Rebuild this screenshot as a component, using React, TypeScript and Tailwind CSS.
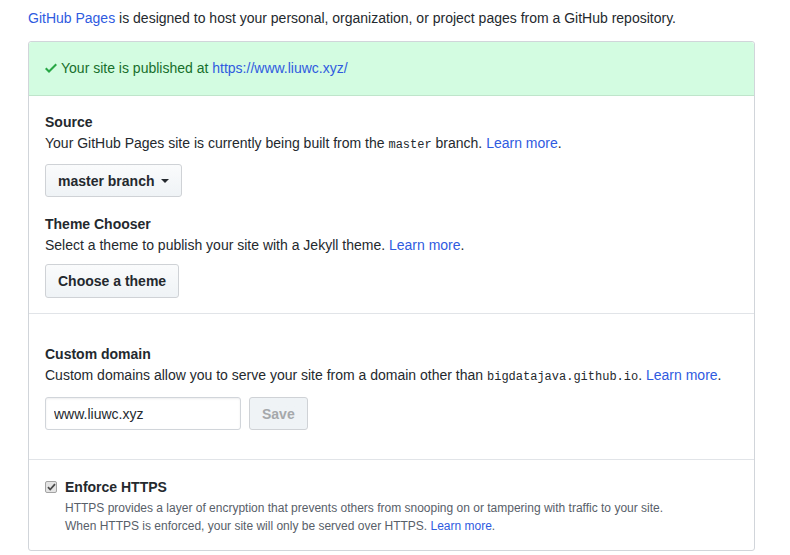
import React from "react";

const LINK = "text-[#2f5bdf]";

function Check() {
  return (
    <svg width="12" height="16" viewBox="0 0 12 16" className="inline-block fill-[#28a745] mr-[4px] -mt-[2px] align-middle">
      <path fillRule="evenodd" d="M12 5l-8 8-4-4 1.5-1.5L4 10l6.5-6.5L12 5z" />
    </svg>
  );
}

function Button({ children, disabled, h = "h-[34px]" }: { children: React.ReactNode; disabled?: boolean; h?: string }) {
  return (
    <button
      type="button"
      className={
        "inline-flex items-center px-3 rounded-[3px] border border-[#cfd2d6] bg-gradient-to-b text-sm font-bold " +
        h +
        (disabled ? " from-[#eff3f6] to-[#eff3f6] text-[#a5a8ab]" : " from-[#fafbfc] to-[#eff3f6] text-[#24292e]")
      }
    >
      {children}
    </button>
  );
}

export default function App() {
  return (
    <div className="min-h-screen bg-white text-[#24292e] font-['Liberation_Sans',Arial,sans-serif] text-sm pt-2 pl-[28px]">
      <p className="leading-5 mb-[13px]">
        <a className={LINK}>GitHub Pages</a> is designed to host your personal, organization, or project pages
        from a GitHub repository.
      </p>

      <div className="w-[727px] border border-[#d1d5da] rounded-[3px]">
        {/* Published flash */}
        <div className="bg-[#d3fce1] border-b border-[#bfe5cb] px-4 pt-4 pb-[17px] leading-5 text-[#176f2c] rounded-t-[3px]">
          <Check />
          Your site is published at <a className={LINK}>https://www.liuwc.xyz/</a>
        </div>

        {/* Source + theme */}
        <div className="px-4 pt-4 pb-[15px] border-b border-[#e1e4e8]">
          <h3 className="font-bold leading-5 mb-px">Source</h3>
          <p className="leading-5 mb-[9px]">
            Your GitHub Pages site is currently being built from the{" "}
            <code className="font-['Liberation_Mono',monospace] text-[12px]">master</code> branch.{" "}
            <a className={LINK}>Learn more</a>.
          </p>
          <Button h="h-[33px]">
            master branch
            <svg width="8" height="4" viewBox="0 0 8 4" className="ml-[7px] fill-[#24292e]">
              <path d="M0 0h8L4 4z" />
            </svg>
          </Button>

          <h3 className="font-bold leading-5 mt-[17px] mb-px">Theme Chooser</h3>
          <p className="leading-5 mb-[9px]">
            Select a theme to publish your site with a Jekyll theme. <a className={LINK}>Learn more</a>.
          </p>
          <Button>Choose a theme</Button>
        </div>

        {/* Custom domain */}
        <div className="px-4 pt-[30px] pb-[29px] border-b border-[#e1e4e8]">
          <h3 className="font-bold leading-5 mb-px">Custom domain</h3>
          <p className="leading-5">
            Custom domains allow you to serve your site from a domain other than{" "}
            <code className="font-['Liberation_Mono',monospace] text-[12px]">bigdatajava.github.io</code>.{" "}
            <a className={LINK}>Learn more</a>.
          </p>
          <div className="flex items-start gap-2 mt-[10px]">
            <input
              readOnly
              value="www.liuwc.xyz"
              className="w-[196px] h-[33px] px-2 border border-[#d1d5da] rounded-[3px] text-sm text-[#24292e] outline-none shadow-[inset_0_1px_2px_rgba(27,31,35,0.075)]"
            />
            <Button disabled h="h-[33px]">
              Save
            </Button>
          </div>
        </div>

        {/* Enforce HTTPS */}
        <div className="px-4 pt-[17px] pb-[15px]">
          <div className="flex items-center h-5">
            <span className="w-[12px] h-[12px] rounded-[2px] border border-[#a3a3a3] bg-[#e4e4e4] flex items-center justify-center">
              <svg width="9" height="8" viewBox="0 0 9 8">
                <path d="M1 4.2l2.2 2.3L8 1.2" fill="none" stroke="#4a4a4a" strokeWidth="1.8" />
              </svg>
            </span>
            <span className="ml-2 font-bold text-sm">Enforce HTTPS</span>
          </div>
          <p className="pl-5 mt-[2px] text-xs leading-[18px] text-[#586069]">
            HTTPS provides a layer of encryption that prevents others from snooping on or tampering with traffic to
            your site.
            <br />
            When HTTPS is enforced, your site will only be served over HTTPS. <a className={LINK}>Learn more</a>.
          </p>
        </div>
      </div>
    </div>
  );
}
